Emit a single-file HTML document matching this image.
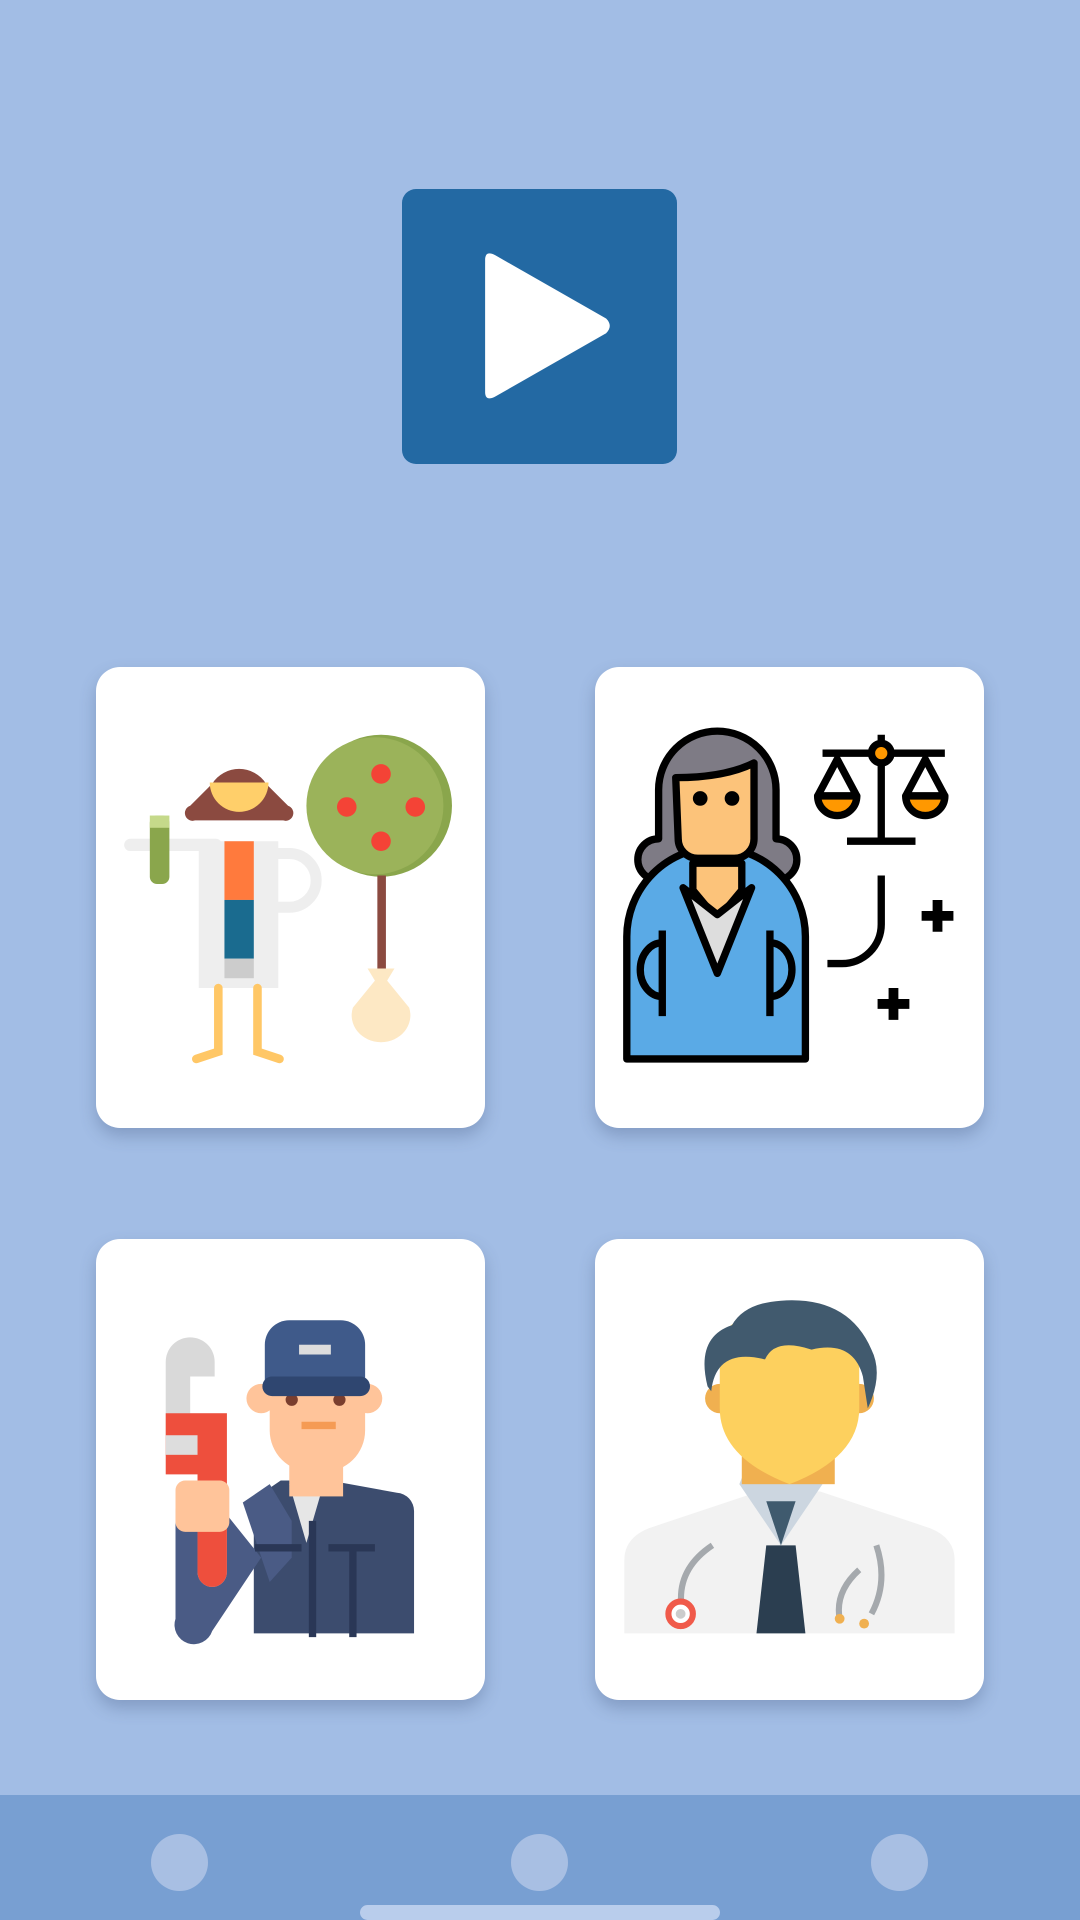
<!DOCTYPE html>
<html><head><meta charset="utf-8"><style>
html,body{margin:0;padding:0}
body{width:1080px;height:1920px;background:#a2bde5;position:relative;overflow:hidden;font-family:"Liberation Sans",sans-serif}
.play{position:absolute;left:402px;top:189px;width:275px;height:275px;background:#2369a3;border-radius:14px}
.card{position:absolute;width:389px;height:461px;background:#fff;border-radius:24px;box-shadow:0 8px 16px rgba(60,80,120,.3);overflow:hidden}
.card svg{width:389px;height:461px;display:block}
.bar{position:absolute;left:0;top:1795px;width:1080px;height:125px;background:#789fd2}
.dot{position:absolute;top:1834px;width:57px;height:57px;border-radius:50%;background:#a8bfe3}
.home{position:absolute;left:360px;top:1905px;width:360px;height:15px;border-radius:8px;background:#b9cdec}
</style></head><body>
<div class="play"><svg width="275" height="275" viewBox="0 0 225 225"><path d="M68 58 Q68 50 76 54 L167 106 Q173 112 167 118 L76 170 Q68 174 68 166 Z" fill="#fff"/></svg></div>

<div class="card" style="left:96px;top:667px"><svg viewBox="0 0 318 376">
<circle cx="233" cy="113" r="58" fill="#8aa64c"/><circle cx="228" cy="113" r="56" fill="#9bb35a"/>
<rect x="230" y="170" width="7" height="80" fill="#8b4a40"/>
<circle cx="233" cy="87" r="8" fill="#f44336"/><circle cx="205" cy="114" r="8" fill="#f44336"/><circle cx="261" cy="114" r="8" fill="#f44336"/><circle cx="233" cy="142" r="8" fill="#f44336"/>
<path d="M222 246 h22 l-6 10 l18 22 a24 22 0 1 1 -46 0 l18 -22 z" fill="#fde8c4"/>
<path d="M95 95 a26 26 0 0 1 44 0 l18 18 a6 6 0 0 1 -4 12 h-72 a6 6 0 0 1 -4 -12 z" fill="#8b4a40"/>
<path d="M93 94 h48 a24 24 0 0 1 -48 0z" fill="#ffcf6a"/>
<path d="M148 152 h10 a20 20 0 0 1 0 44 h-10" stroke="#eee" stroke-width="9" fill="none"/>
<path d="M28 145 h70" stroke="#eee" stroke-width="10" stroke-linecap="round"/>
<rect x="44" y="121" width="16" height="56" rx="6" fill="#8aa64c"/><rect x="44" y="121" width="16" height="10" fill="#c5d98a"/>
<rect x="84" y="142" width="65" height="120" fill="#eee"/>
<rect x="105" y="142" width="24" height="48" fill="#ff7a3d"/><rect x="105" y="190" width="24" height="48" fill="#1a6b8f"/><rect x="105" y="238" width="24" height="16" fill="#ccc"/>
<path d="M100 262 v52 l-18 6 M132 262 v52 l18 6" stroke="#ffc766" stroke-width="7" fill="none" stroke-linecap="round"/>
</svg></div>

<div class="card" style="left:595px;top:667px"><svg viewBox="0 0 318 376" fill="none" stroke="#000" stroke-width="6" stroke-linejoin="round">
<path d="M52 140 v-40 a48 48 0 0 1 96 0 v40 a16 16 0 0 1 0 34 h-96 a16 16 0 0 1 0 -34z" fill="#7e7b85"/>
<path d="M26 320 v-100 a60 60 0 0 1 146 0 v100 z" fill="#5aaae6"/>
<path d="M80 160 h40 v22 l-20 24 l-20 -24z" fill="#fcc37a"/>
<path d="M72 180 l28 70 l28 -70 l-28 22z" fill="#ddd"/>
<path d="M66 90 q40 0 64 -12 v62 a16 16 0 0 1 -16 16 h-30 a16 16 0 0 1 -16 -16z" fill="#fcc37a"/>
<circle cx="86" cy="107" r="3" fill="#000"/><circle cx="112" cy="107" r="3" fill="#000"/>
<path d="M55 215 v70 M143 215 v70 M55 225 a18 22 0 0 0 0 44 M143 225 a18 22 0 0 1 0 44"/>
<path d="M234 55 v90 M186 70 h100 M206 142 h56 M198 75 l-16 30 h32z M270 75 l-16 30 h32z" />
<path d="M182 105 a16 16 0 0 0 32 0z M254 105 a16 16 0 0 0 32 0z" fill="#ff9800"/>
<circle cx="234" cy="70" r="8" fill="#ff9800"/>
<path d="M234 170 v40 a32 32 0 0 1 -32 32 h-12"/>
<path d="M280 190 v26 M267 203 h26 M244 262 v26 M231 275 h26" stroke-width="8"/>
</svg></div>

<div class="card" style="left:96px;top:1239px"><svg viewBox="0 0 318 376">
<path d="M129 212 l22 -15 h40 l55 10 a15 15 0 0 1 14 15 v100 h-131z" fill="#3c4c6e"/>
<path d="M120 215 l22 -15 l18 30 v30 l-18 20 z" fill="#4a5b85"/>
<path d="M158 200 h28 l-14 48z" fill="#e6e6e6"/>
<path d="M65 300 v-80 l30 -10 l40 50 l-40 60 a15 15 0 0 1 -30 -10z" fill="#4a5b85"/>
<circle cx="135" cy="130" r="12" fill="#ffc49a"/><circle cx="222" cy="130" r="12" fill="#ffc49a"/>
<rect x="142" y="105" width="78" height="85" rx="34" fill="#ffc49a"/>
<rect x="158" y="180" width="44" height="30" fill="#ffc49a"/>
<circle cx="160" cy="131" r="5" fill="#7a3e2e"/><circle cx="199" cy="131" r="5" fill="#7a3e2e"/>
<path d="M168 152 h28" stroke="#f59b54" stroke-width="6"/>
<path d="M138 118 v-32 a20 20 0 0 1 20 -20 h42 a20 20 0 0 1 20 20 v32z" fill="#3f5a8a"/>
<rect x="136" y="112" width="88" height="16" rx="8" fill="#2f4670"/>
<rect x="166" y="86" width="26" height="8" fill="#ddd"/>
<path d="M57 100 a20 20 0 0 1 40 0 v12 h-20 v30 h30 v130 a12 12 0 0 1 -24 0 v-95 h-26z" fill="#d9d9d9"/>
<path d="M57 142 h50 v130 a12 12 0 0 1 -24 0 v-80 h-26z" fill="#ee4f3d"/>
<rect x="57" y="160" width="26" height="16" fill="#ddd"/>
<rect x="65" y="197" width="44" height="42" rx="8" fill="#ffc49a"/>
<path d="M130 252 h38 M190 252 h38 M210 255 v70 M177 230 v95" stroke="#2a3756" stroke-width="6"/>
</svg></div>

<div class="card" style="left:595px;top:1239px"><svg viewBox="0 0 318 376">
<path d="M24 262 q0 -18 20 -26 l90 -30 h50 l90 30 q20 8 20 26 v60 h-270z" fill="#f2f2f2"/>
<path d="M118 200 l34 50 l34 -50 l-8 -20 h-52z" fill="#ccd6e0"/>
<path d="M140 250 h24 l8 72 h-40z" fill="#2b3e50"/>
<path d="M152 250 l-12 -36 h24z" fill="#3f5a6e"/>
<rect x="120" y="170" width="76" height="30" fill="#f0b050"/>
<circle cx="102" cy="130" r="12" fill="#f0b050"/><circle cx="216" cy="130" r="12" fill="#f0b050"/>
<path d="M102 90 q0 -30 57 -34 q57 4 57 34 v48 q0 40 -57 62 q-57 -22 -57 -62z" fill="#fdd05e"/>
<path d="M92 120 q-10 -40 20 -50 q10 -18 40 -20 q55 -4 74 40 q10 20 -3 48 l-4 -26 q-8 -30 -42 -22 q-30 -10 -38 8 q-40 -10 -44 26z" fill="#415a6e"/>
<path d="M96 250 q-30 20 -25 52 M230 250 q10 30 -4 56 M216 270 q-20 18 -16 40" stroke="#a5a9ad" stroke-width="5" fill="none"/>
<circle cx="70" cy="306" r="10" fill="#fff" stroke="#f05a4a" stroke-width="5"/><circle cx="70" cy="306" r="4" fill="#ccc"/>
<circle cx="200" cy="310" r="4" fill="#f0b050"/><circle cx="220" cy="314" r="4" fill="#f0b050"/>
</svg></div>

<div class="bar"></div>
<div class="dot" style="left:151px"></div><div class="dot" style="left:511px"></div><div class="dot" style="left:871px"></div>
<div class="home"></div>
</body></html>
